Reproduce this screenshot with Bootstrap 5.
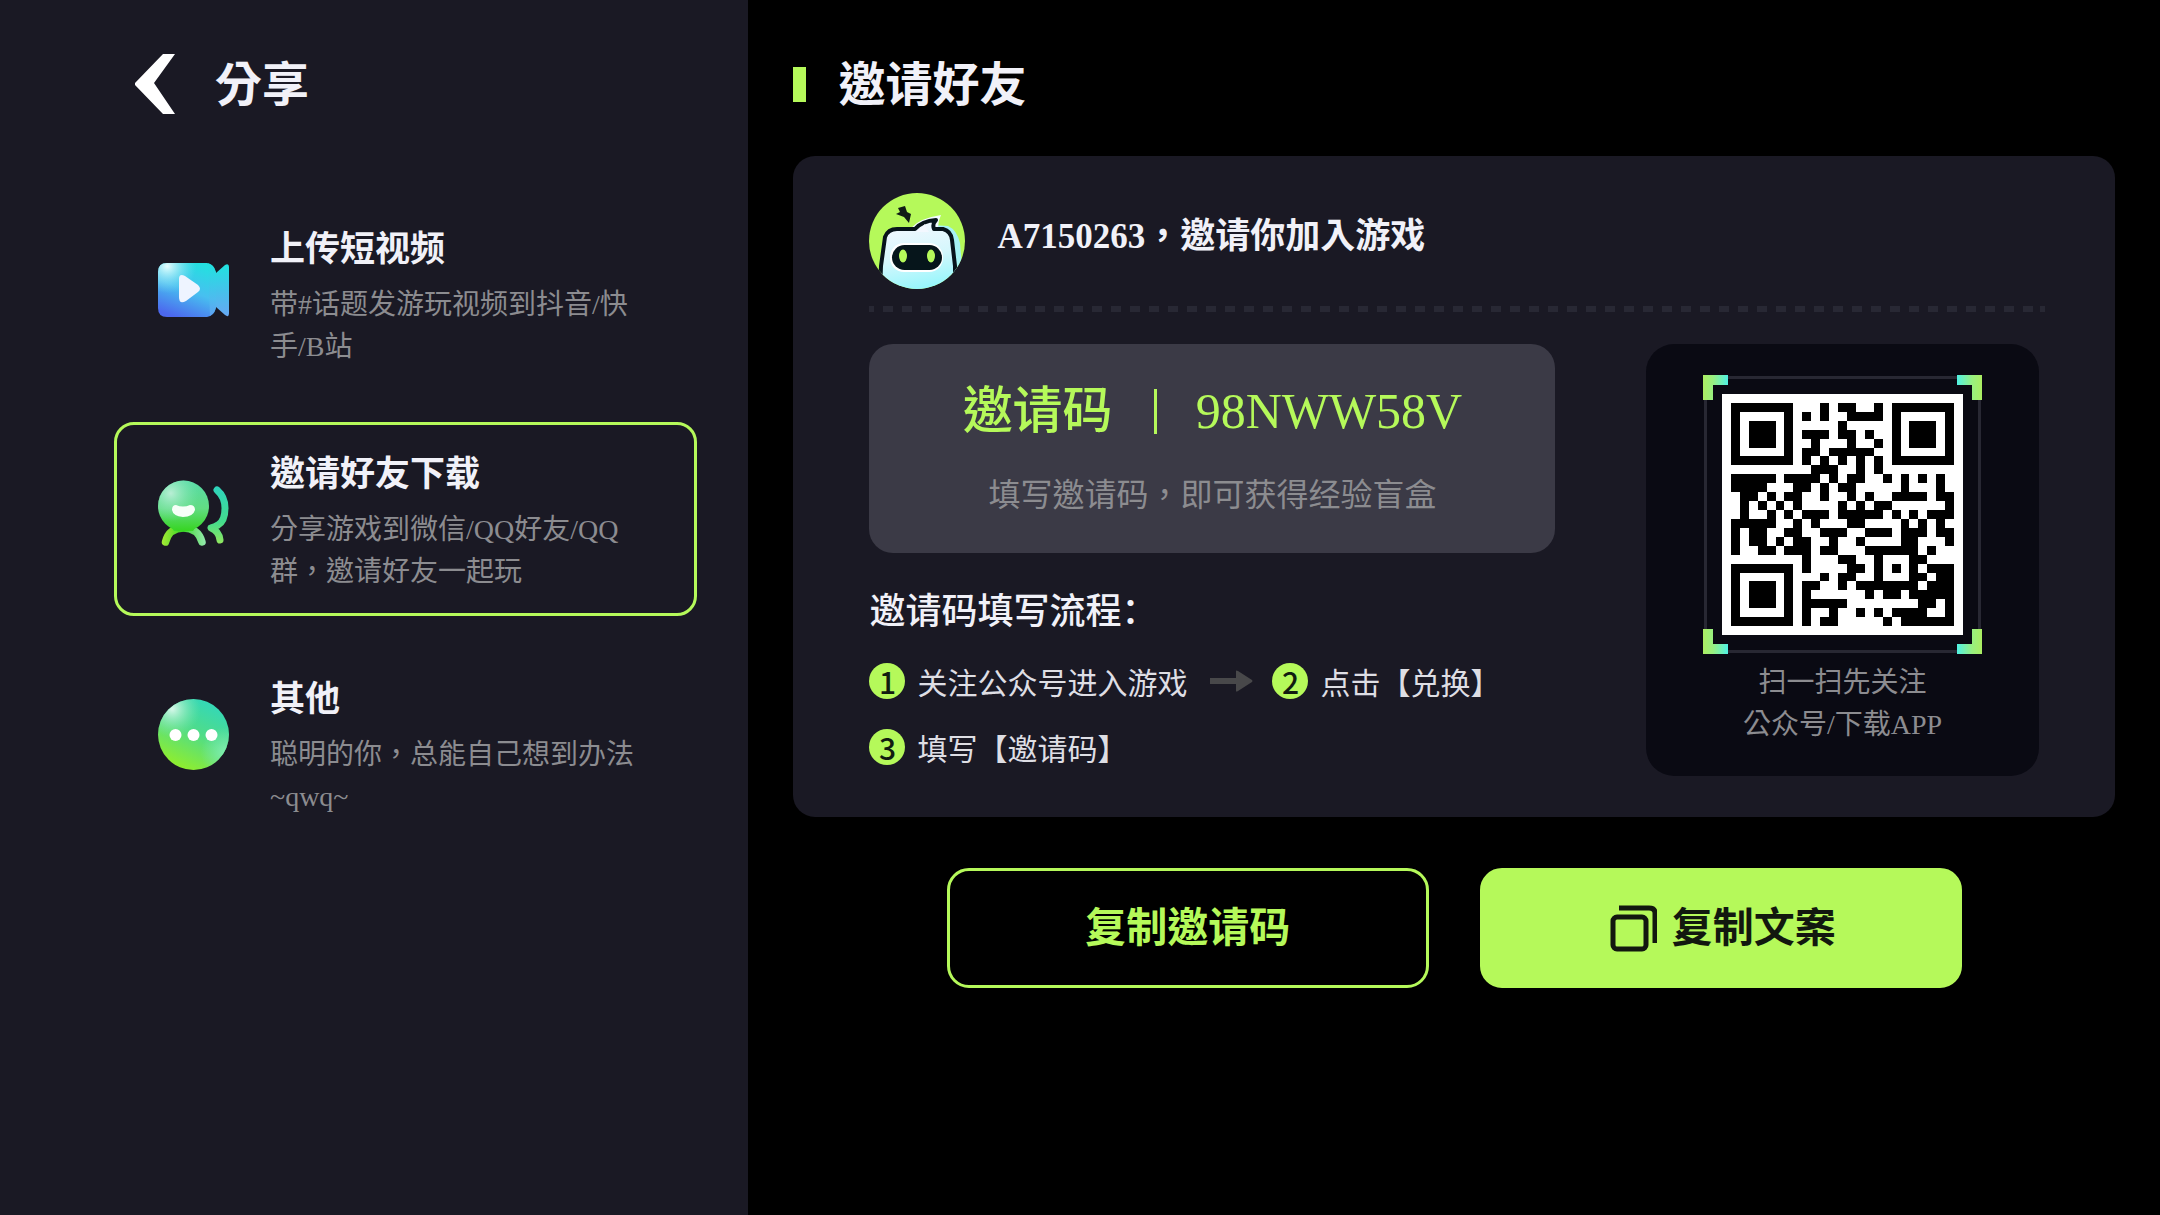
<!DOCTYPE html>
<html lang="zh-Hant">
<head>
<meta charset="utf-8">
<meta name="viewport" content="width=device-width, initial-scale=1">
<title>分享</title>
<link rel="stylesheet" href="https://cdn.jsdelivr.net/npm/bootstrap@5.3.0/dist/css/bootstrap.min.css">
<style>
  :root { --lime: #b5f95a; --panel: #1a1924; --muted: #8c8c90; --pale: #f1f1f8; }
  body { background: #000; color: var(--pale); font-family: "Liberation Serif", "Noto Sans CJK TC", sans-serif; }
  .share-side { flex: 0 0 34.65%; background: var(--panel); padding: 48px 51px 48px 114px; }
  .share-main { padding: 48px 45px; min-width: 0; }
  .page-bar { height: 72px; }
  .page-title { font-size: 47px; line-height: 72px; font-weight: 700; padding-top: 2px; }
  .back-btn { padding: 0 20px 0 21px; margin-right: 20px; line-height: 0; }
  .side-list { margin-top: 77px; gap: 31px; }
  .side-item { display: flex; min-height: 194px; padding: 28px 44px 20px 41px; border: 3px solid transparent; border-radius: 20px; text-decoration: none; color: var(--pale); }
  .side-item.active { border-color: var(--lime); }
  .side-icon { flex: 0 0 71px; height: 126px; margin-right: 41px; }
  .side-title { font-size: 35px; line-height: 44px; font-weight: 700; margin-bottom: 12px; }
  .side-text, .qr-text { font-size: 28px; line-height: 42px; color: var(--muted); }
  .title-mark { width: 13px; height: 35px; background: var(--lime); margin-right: 32px; }
  .invite { margin-top: 36px; background: var(--panel); border-radius: 22px; padding: 37px 76px 41px 76px; }
  .invite-name { font-size: 35px; line-height: 88px; font-weight: 700; margin-left: 32px; }
  .invite-rule { height: 6px; margin: 17px -6px 32px 0; background: repeating-linear-gradient(90deg, #282834 0 10px, transparent 10px 19px); background-position-x: -5px; }
  .code-col { flex: 0 1 686px; }
  .code-box { height: 209px; background: #3b3a46; border-radius: 24px; padding-top: 35px; }
  .code-line { font-size: 50px; line-height: 64px; color: var(--lime); }
  .code-line strong { font-weight: 500; }
  .code-split { width: 3px; height: 45px; background: var(--lime); margin: 0 39px 0 41px; }
  .code-note { font-size: 32px; line-height: 44px; color: var(--muted); margin-top: 30px; }
  .steps-wrap { font-family: "Noto Sans CJK SC", sans-serif; margin-top: 31px; }
  .steps-title { font-size: 36px; line-height: 48px; font-weight: 500; }
  .step-row { height: 37px; margin-top: 30px; }
  .step-row + .step-row { margin-top: 29px; }
  .step-num { width: 36px; height: 36px; border-radius: 50%; background: var(--lime); color: #111c10; font-size: 30px; line-height: 36px; font-weight: 500; text-align: center; margin-right: 12px; }
  .step-text { font-size: 30px; line-height: 36px; color: #dedee4; white-space: nowrap; }
  .step-arrow { margin: 0 19px 0 23px; }
  .qr-box { flex: 0 0 393px; height: 432px; background: #0a0a13; border-radius: 28px; padding-top: 31px; }
  .qr-text { margin-top: 8px; text-align: center; }
  .action-row { margin-top: 51px; gap: 51px; }
  .action-btn { width: 482px; height: 120px; border: 3px solid var(--lime); border-radius: 22px; font-size: 41px; line-height: 56px; font-weight: 700; display: flex; align-items: center; justify-content: center; }
  .action-line, .action-line:hover { color: var(--lime); background: transparent; border-color: var(--lime); }
  .action-fill, .action-fill:hover { color: #12180f; background: #b5f95a; border-color: #b5f95a; gap: 15px; padding-left: 16px; }
</style>
<script src="https://cdn.jsdelivr.net/npm/bootstrap@5.3.0/dist/js/bootstrap.bundle.min.js"></script>
</head>
<body>
<div class="d-flex min-vh-100">
  <aside class="share-side">
    <header class="page-bar d-flex align-items-center">
      <button type="button" class="btn border-0 back-btn" aria-label="返回">
        <svg width="40" height="60" viewBox="0 0 40 60"><path fill="#fff" d="M28 0H40L19 29L40 60H28L0 31V29Z"/></svg>
      </button>
      <h1 class="page-title mb-0">分享</h1>
    </header>
    <nav class="side-list d-flex flex-column">
      <a class="side-item" href="#video">
        <svg class="side-icon" viewBox="0 0 71 126">
          <defs>
            <linearGradient id="vidBase" x1=".7" y1="0" x2=".3" y2="1"><stop offset="0" stop-color="#24e0e0"/><stop offset=".5" stop-color="#48bff0"/><stop offset="1" stop-color="#4c68ee"/></linearGradient>
            <radialGradient id="vidLight" cx=".16" cy=".06" r=".5"><stop offset="0" stop-color="#e8ffff"/><stop offset="1" stop-color="#7de0f4" stop-opacity="0"/></radialGradient>
            <linearGradient id="vidTail" x1="0" y1="0" x2="0" y2="1"><stop offset="0" stop-color="#20e3df"/><stop offset=".55" stop-color="#48c0ec"/><stop offset="1" stop-color="#66a8f4"/></linearGradient>
          </defs>
          <g transform="translate(0 35)">
            <path fill="url(#vidTail)" d="M52 14L58 10L67 2Q71 0 71 4V50Q71 55 67 52L58 44L52 40Z"/>
            <path fill="url(#vidBase)" d="M9 0H49Q56 1 58 9V45Q56 53 49 54H9Q0 54 0 45V9Q0 0 9 0Z"/>
            <path fill="url(#vidLight)" d="M9 0H49Q56 1 58 9V45Q56 53 49 54H9Q0 54 0 45V9Q0 0 9 0Z"/>
            <path fill="url(#vidTail)" d="M50 0Q56 2 58 10V44Q57 50 52 53Z" opacity=".7"/>
            <path fill="#eef4ff" d="M21 16Q21 10 27 13L40 22Q44 26 40 29L28 38Q21 42 21 34Z"/>
          </g>
        </svg>
        <div><h2 class="side-title">上传短视频</h2><p class="side-text m-0">带#话题发游玩视频到抖音/快手/B站</p></div>
      </a>
      <a class="side-item active" href="#invite" aria-current="page">
        <svg class="side-icon" viewBox="0 0 71 126">
          <defs>
            <linearGradient id="palBase" x1=".5" y1="0" x2=".5" y2="1"><stop offset="0" stop-color="#58dba8"/><stop offset=".55" stop-color="#62dc83"/><stop offset="1" stop-color="#35d51e"/></linearGradient>
            <radialGradient id="palLight" cx=".25" cy=".25" r=".55"><stop offset="0" stop-color="#b9eed5"/><stop offset="1" stop-color="#7de8b0" stop-opacity="0"/></radialGradient>
            <linearGradient id="palLegs" gradientUnits="userSpaceOnUse" x1="4" y1="0" x2="47" y2="0"><stop offset="0" stop-color="#a4e935"/><stop offset=".45" stop-color="#3cd827"/><stop offset="1" stop-color="#92e9ab"/></linearGradient>
            <linearGradient id="palArm" gradientUnits="userSpaceOnUse" x1="0" y1="5" x2="0" y2="65"><stop offset="0" stop-color="#2ed3bd"/><stop offset=".6" stop-color="#44dc8c"/><stop offset="1" stop-color="#9ae85a"/></linearGradient>
          </defs>
          <g transform="translate(0 28)">
            <path d="M7.500 61Q11 47 25.500 47Q40 47 44 61" fill="none" stroke="url(#palLegs)" stroke-width="7.500" stroke-linecap="round"/>
            <path d="M12 44H39L35 50H16Z" fill="#3cd82a"/>
            <circle cx="25.500" cy="25" r="25.500" fill="url(#palBase)"/>
            <circle cx="25.500" cy="25" r="25.500" fill="url(#palLight)"/>
            <path d="M18 24Q25 27 32 24Q37 24 37 29Q35 36 25 36Q15 35 14 29Q14 24 18 24Z" fill="#f6fff8"/>
            <path d="M59 9Q67 16 67 27Q67 40 60 44Q57 46 53 47Q61 50 62 59" fill="none" stroke="url(#palArm)" stroke-width="7" stroke-linecap="round" stroke-linejoin="round"/>
          </g>
        </svg>
        <div><h2 class="side-title">邀请好友下载</h2><p class="side-text m-0">分享游戏到微信/QQ好友/QQ群，邀请好友一起玩</p></div>
      </a>
      <a class="side-item" href="#other">
        <svg class="side-icon" viewBox="0 0 71 126">
          <defs>
            <linearGradient id="dotBase" x1=".75" y1=".1" x2=".35" y2=".95"><stop offset="0" stop-color="#36d8b4"/><stop offset=".45" stop-color="#50dc88"/><stop offset="1" stop-color="#8ced32"/></linearGradient>
            <radialGradient id="dotLight" cx=".2" cy=".14" r=".4"><stop offset="0" stop-color="#d8f8ea"/><stop offset="1" stop-color="#7de8b0" stop-opacity="0"/></radialGradient>
            <radialGradient id="dotMint" cx=".95" cy=".75" r=".35"><stop offset="0" stop-color="#80efb0"/><stop offset="1" stop-color="#7de8b0" stop-opacity="0"/></radialGradient>
          </defs>
          <g transform="translate(0 21)">
            <circle cx="35.500" cy="35.500" r="35.500" fill="url(#dotBase)"/><circle cx="35.500" cy="35.500" r="35.500" fill="url(#dotLight)"/><circle cx="35.500" cy="35.500" r="35.500" fill="url(#dotMint)"/>
            <g fill="#fff"><circle cx="17.500" cy="36" r="6"/><circle cx="35.500" cy="36" r="6"/><circle cx="53.500" cy="36" r="6"/></g>
          </g>
        </svg>
        <div><h2 class="side-title">其他</h2><p class="side-text m-0">聪明的你，总能自己想到办法~qwq~</p></div>
      </a>
    </nav>
  </aside>

  <main class="share-main flex-grow-1">
    <header class="page-bar d-flex align-items-center">
      <span class="title-mark"></span>
      <h2 class="page-title mb-0">邀请好友</h2>
    </header>
    <section class="invite">
      <div class="d-flex">
        <svg width="96" height="96" viewBox="0 0 96 96">
          <defs>
            <clipPath id="faceClip"><circle cx="48" cy="48" r="48"/></clipPath>
            <linearGradient id="headFill" x1=".4" y1="0" x2=".6" y2="1"><stop offset="0" stop-color="#f4f8ff"/><stop offset=".5" stop-color="#d4f7fc"/><stop offset="1" stop-color="#8df6fc"/></linearGradient>
          </defs>
          <g clip-path="url(#faceClip)">
            <rect width="96" height="96" fill="#b5f95a"/>
            <path fill="#a5f3f4" d="M62 32L79 33Q88 37 91 50L93 74L86 84Z"/>
            <path fill="#f1faff" d="M42 35Q51 25 72 22Q69 28 69 35Z"/>
            <path fill="url(#headFill)" stroke="#07141b" stroke-width="4" stroke-linejoin="round" d="M11 100L12 73L16 44Q19 36 28 36H46Q53 28 67 27Q63 31 65 36H74Q82 38 83 47L86 73V100Z"/>
            <path fill="#f3f8ff" d="M46 39Q52 36 56 31Q57 36 60 39Z"/>
            <path fill="#1a1924" d="M0 77H10L13 82V96H0ZM88 77H96V96H84V82Z"/>
            <rect x="21" y="50" width="53" height="29" rx="14" fill="#fff"/>
            <rect x="23" y="52" width="50" height="25" rx="12.500" fill="#06151b"/>
            <ellipse cx="34" cy="63" rx="4" ry="6.500" fill="#b5f95a"/><ellipse cx="62" cy="63" rx="4" ry="6.500" fill="#b5f95a"/>
            <path fill="#101a16" d="M29 15L36 13L38 19L42 21L40 30L35 24L27 21L31 19Z"/>
          </g>
        </svg>
        <div class="invite-name">A7150263，邀请你加入游戏</div>
      </div>
      <div class="invite-rule"></div>
      <div class="d-flex justify-content-between">
        <div class="code-col">
          <div class="code-box text-center">
            <div class="code-line d-flex align-items-center justify-content-center"><strong>邀请码</strong><span class="code-split"></span><span>98NWW58V</span></div>
            <p class="code-note mb-0">填写邀请码，即可获得经验盲盒</p>
          </div>
          <div class="steps-wrap" lang="zh-Hans">
            <h3 class="steps-title m-0">邀请码填写流程：</h3>
            <div class="step-row d-flex align-items-center">
              <span class="step-num">1</span><span class="step-text">关注公众号进入游戏</span>
              <svg class="step-arrow" width="43" height="22" viewBox="0 0 43 22"><path fill="#48484a" d="M0 8H26V1Q26 0 28 1L42 10Q43 11 42 12L28 21Q26 22 26 21V14H0Z"/></svg>
              <span class="step-num">2</span><span class="step-text">点击【兑换】</span>
            </div>
            <div class="step-row d-flex align-items-center">
              <span class="step-num">3</span><span class="step-text">填写【邀请码】</span>
            </div>
          </div>
        </div>
        <div class="qr-box text-center">
          <svg class="d-block mx-auto" width="279" height="279" viewBox="0 0 279 279" role="img" aria-label="二维码">
            <defs>
              <linearGradient id="cornerFill"><stop offset="0" stop-color="#acee62"/><stop offset=".4" stop-color="#98f080"/><stop offset="1" stop-color="#50f2e4"/></linearGradient>
              <path id="corner" fill="url(#cornerFill)" d="M0 0H25V10H10V25H0Z"/>
              <g id="finder"><path fill-rule="evenodd" d="M0 0H7V7H0ZM1 1V6H6V1Z"/><path d="M2 2H5V5H2Z"/></g>
            </defs>
            <rect x="2.500" y="2.500" width="274" height="274" fill="none" stroke="#282833" stroke-width="3"/>
            <use href="#corner"/><use href="#corner" transform="translate(279 0) scale(-1 1)"/>
            <use href="#corner" transform="translate(0 279) scale(1 -1)"/><use href="#corner" transform="translate(279 279) scale(-1 -1)"/>
            <svg x="19" y="19" width="241" height="241" viewBox="-1 -1 27 27" shape-rendering="crispEdges">
              <rect x="-1" y="-1" width="27" height="27" fill="#fff"/>
              <use href="#finder"/><use href="#finder" x="18"/><use href="#finder" y="18"/>
              <path stroke="#000" d="M10 .5h1M12 .5h2M16 .5h1
                M8 1.500h1M10 1.500h1M13 1.500h4
                M12 2.500h1
                M8 3.500h3M12 3.500h2M15 3.500h1
                M9 4.500h1M13 4.500h1M16 4.500h1
                M8 5.500h2M11 5.500h5
                M8 6.500h1M10 6.500h1M12 6.500h1M14 6.500h1M16 6.500h1
                M9 7.500h3M14 7.500h1M16 7.500h1
                M0 8.500h5M6 8.500h4M11 8.500h1M13 8.500h2M17 8.500h1M19 8.500h1M21 8.500h1M23 8.500h1
                M0 9.500h4M7 9.500h2M10 9.500h1M12 9.500h2M19 9.500h1M23 9.500h1
                M1 10.500h2M4 10.500h1M6 10.500h2M10 10.500h1M13 10.500h1M15 10.500h1M18 10.500h4M23 10.500h2
                M1 11.500h1M3 11.500h1M5 11.500h1M7 11.500h1M12 11.500h1M14 11.500h1M16 11.500h2M24 11.500h1
                M1 12.500h1M4 12.500h1M6 12.500h1M8 12.500h3M12 12.500h5M18 12.500h1M20 12.500h1M22 12.500h3
                M0 13.500h5M7 13.500h1M9 13.500h1M13 13.500h2M19 13.500h1M21 13.500h1M23 13.500h1
                M0 14.500h1M2 14.500h2M6 14.500h2M10 14.500h3M15 14.500h3M19 14.500h3M23 14.500h2
                M0 15.500h1M2 15.500h2M5 15.500h1M7 15.500h2M11 15.500h1M14 15.500h1M19 15.500h2M24 15.500h1
                M0 16.500h1M3 16.500h2M6 16.500h3M10 16.500h2M15 16.500h6M22 16.500h1
                M8 17.500h1M12 17.500h2M16 17.500h1M20 17.500h2
                M8 18.500h1M13 18.500h2M16 18.500h1M18 18.500h1M20 18.500h1M22 18.500h3
                M10 19.500h1M12 19.500h2M16 19.500h1M20 19.500h2M23 19.500h2
                M8 20.500h2M12 20.500h1M14 20.500h7M22 20.500h3
                M8 21.500h1M15 21.500h1M17 21.500h2M20 21.500h5
                M8 22.500h5M21 22.500h2M24 22.500h1
                M8 23.500h1M11 23.500h1M14 23.500h1M16 23.500h1M18 23.500h4M24 23.500h1
                M8 24.500h1M10 24.500h2M17 24.500h1M19 24.500h6"/>
            </svg>
          </svg>
          <p class="qr-text mb-0">扫一扫先关注<br>公众号/下载APP</p>
        </div>
      </div>
    </section>
    <div class="action-row d-flex justify-content-center">
      <button type="button" class="btn action-btn action-line">复制邀请码</button>
      <button type="button" class="btn action-btn action-fill">
        <svg width="47" height="47" viewBox="0 0 47 47" fill="none" stroke="#12180f" stroke-width="5"><rect x="3" y="12" width="33" height="32" rx="4"/><path d="M9 3H39Q45 3 45 8V38"/></svg>
        <span>复制文案</span>
      </button>
    </div>
  </main>
</div>
</body>
</html>
